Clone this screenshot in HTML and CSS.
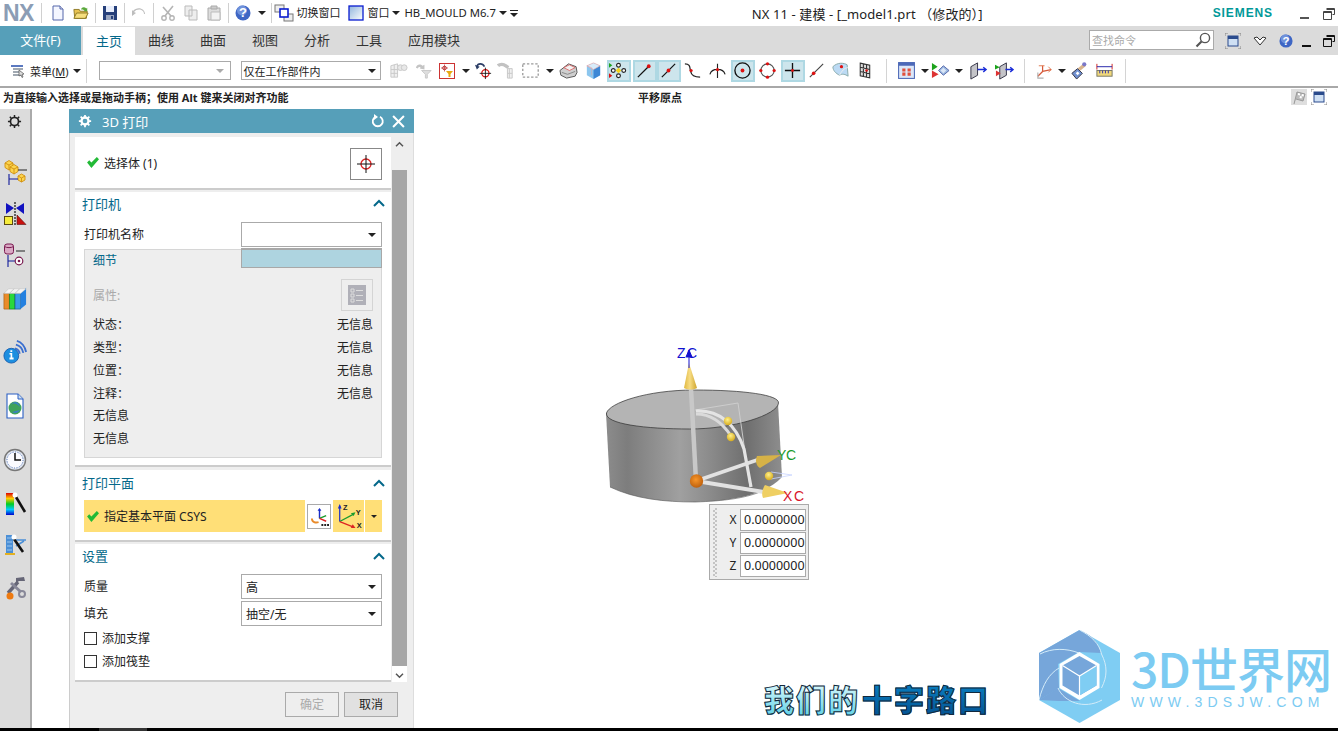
FILE: index.html
```html
<!DOCTYPE html>
<html lang="zh">
<head>
<meta charset="utf-8">
<title>NX 11 - 建模</title>
<link rel="stylesheet" href="styles.css">
</head>
<body>
<header class="titlebar">
  <div class="nx">NX</div>
  <i class="vsep s1"></i>
  <svg class="qa" viewBox="0 0 16 16"><path d="M3 1h7l3 3v11H3z" fill="#f4f6ff" stroke="#5566aa"/><path d="M10 1v3h3" fill="#dde" stroke="#5566aa"/></svg>
  <svg class="qa" viewBox="0 0 18 16"><path d="M1 4h6l1 2h8l-1 8H2z" fill="#e8c352" stroke="#8a7420"/><path d="M4 8h13l-3 6H1z" fill="#f6de7e" stroke="#8a7420"/><path d="M9 4c1-3 4-3 6-1l1-1v4h-4l1-1c-1-1-3-1-4-1z" fill="#5aa83c"/></svg>
  <i class="vsep"></i>
  <svg class="qa" viewBox="0 0 16 16"><path d="M1 1h14v14H1z" fill="#26407a"/><path d="M4 1h8v6H4z" fill="#e8eefc"/><path d="M4 10h8v5H4z" fill="#9aa6c0"/><path d="M9 11h2v3H9z" fill="#26407a"/></svg>
  <i class="vsep"></i>
  <svg class="qa" viewBox="0 0 16 16"><path d="M3 9c0-5 7-6 10-2l-2 1 4 3V5l-1 1C10 1 2 3 2 9z" fill="#bdbdbd" transform="matrix(-1 0 0 1 16 0)"/></svg>
  <i class="vsep"></i>
  <svg class="qa" viewBox="0 0 16 16"><path d="M13 1L5 11M3 2l8 9" stroke="#b5b5b5" stroke-width="1.600" fill="none"/><circle cx="4" cy="13" r="2.200" fill="none" stroke="#b5b5b5" stroke-width="1.400"/><circle cx="12" cy="13" r="2.200" fill="none" stroke="#b5b5b5" stroke-width="1.400"/></svg>
  <svg class="qa" viewBox="0 0 16 16"><path d="M2 1h7v10H2zM6 5h8v10H6z" fill="#eee" stroke="#bbb"/></svg>
  <svg class="qa" viewBox="0 0 16 16"><path d="M2 3h12v12H2z" fill="#ddd" stroke="#aaa"/><path d="M5 1h6v3H5z" fill="#ccc" stroke="#aaa"/><path d="M5 7h9v8H5z" fill="#f2f2f2" stroke="#bbb"/></svg>
  <i class="vsep"></i>
  <svg class="qa" viewBox="0 0 16 16"><circle cx="8" cy="8" r="7.500" fill="#3e66c4"/><circle cx="7" cy="5.500" r="5" fill="#6f91db"/><text x="8" y="12.400" class="qmark">?</text></svg>
  <i class="tri t1"></i>
  <i class="vsep"></i>
  <svg class="qa w-switch" viewBox="0 0 20 18"><rect x="1" y="1" width="9" height="7" fill="#eee" stroke="#777"/><rect x="10" y="10" width="9" height="7" fill="#eee" stroke="#777"/><rect x="6" y="5" width="8" height="8" fill="#fff" stroke="#0a1cd0" stroke-width="1.600"/></svg>
  <span class="qt">切换窗口</span>
  <svg class="qa w-win" viewBox="0 0 16 16"><defs><linearGradient id="wg" x1="0" y1="0" x2="1" y2="1"><stop offset="0" stop-color="#8fb4dc"/><stop offset="1" stop-color="#fff"/></linearGradient></defs><rect x="1" y="1" width="14" height="14" fill="url(#wg)" stroke="#0a1cd0" stroke-width="1.300"/></svg>
  <span class="qt">窗口</span>
  <i class="tri t2"></i>
  <span class="qt hb">HB_MOULD M6.7</span>
  <i class="tri t3"></i>
  <svg class="t4" viewBox="0 0 8 7"><path d="M0 .5h8" stroke="#222"/><path d="M0 3h8L4 7z" fill="#222"/></svg>
  <div class="doc-title">NX 11 - 建模 - [_model1.prt （修改的）]</div>
  <div class="siemens">SIEMENS</div>
  <i class="win-min"></i>
  <svg class="win-res" viewBox="0 0 12 12"><path d="M3.500 .5h8v6h-2M.5 3.500h8v8h-8z" fill="none" stroke="#444"/><path d="M.5 4.500h8M3.500 1.500h8" stroke="#444"/></svg>
</header>

<nav class="tabs">
  <div class="tab file">文件(F)</div>
  <div class="tab active">主页</div>
  <div class="tab">曲线</div>
  <div class="tab">曲面</div>
  <div class="tab">视图</div>
  <div class="tab">分析</div>
  <div class="tab">工具</div>
  <div class="tab wide">应用模块</div>
  <div class="search">
    <span>查找命令</span>
    <svg class="mag" viewBox="0 0 16 16"><circle cx="10" cy="6" r="4.600" fill="#fff" stroke="#555" stroke-width="1.400"/><path d="M6.500 9.500L1.500 14.500" stroke="#555" stroke-width="2.200"/></svg>
  </div>
  <svg class="fit" viewBox="0 0 16 16"><path d="M0 3V0h3M13 0h3v3M16 13v3h-3M3 16H0v-3" fill="none" stroke="#888"/><rect x="3" y="3" width="10" height="10" fill="#cfe0f4" stroke="#2a4b8d"/><rect x="3" y="3" width="10" height="3" fill="#2a4b8d"/></svg>
  <svg class="chev" viewBox="0 0 14 10"><path d="M1 2l3-1 3 3 3-3 3 1-6 7z" fill="#fff" stroke="#333"/></svg>
  <svg class="help" viewBox="0 0 16 16"><circle cx="8" cy="8" r="7.500" fill="#3e66c4"/><circle cx="7" cy="5.500" r="5" fill="#6f91db"/><text x="8" y="12.400" class="qmark">?</text></svg>
  <i class="win-min dark"></i>
  <svg class="win-res r2" viewBox="0 0 12 12"><path d="M3.500 .5h8v6h-2M.5 3.500h8v8h-8z" fill="none" stroke="#111"/><path d="M.5 4.500h8M3.500 1.500h8" stroke="#111"/></svg>
</nav>

<section class="toolbar">
  <svg class="menu-ic" viewBox="0 0 16 14"><path d="M1 2h12M3 5h10M3 8h8M3 11h8" stroke="#456" stroke-width="1.200"/><path d="M1 1h12v2H1z" fill="#5b79c0"/><path d="M9 6l5 4-2 .5 1 2.500-1 .5-1-2.500-2 1z" fill="#ddd" stroke="#555" stroke-width=".7"/></svg>
  <span class="menu-t">菜单(<u>M</u>)</span>
  <i class="tri t5"></i>
  <i class="tsep t-a"></i>
  <div class="combo c1"><i class="tri dim"></i></div>
  <div class="combo c2"><span>仅在工作部件内</span><i class="tri"></i></div>
  <div class="tb w24 first"><svg viewBox="0 0 20 20"><path d="M2 5l7-2v14l-7 0zM2 9h7M2 13h7M5.500 4v13" fill="#f0f0f0" stroke="#c8c8c8"/><circle cx="12" cy="7" r="3" fill="#e8e8e8" stroke="#c8c8c8"/><circle cx="16" cy="7" r="3" fill="#e8e8e8" stroke="#c8c8c8"/></svg></div>
  <div class="tb w26"><svg viewBox="0 0 20 20"><path d="M2 7c1-4 5-4 7-2l2-1v5l-5-1 1-1c-1-1-2-1-3 1z" fill="#c4c4c4"/><path d="M8 10h10l-4 4v4h-2v-4z" fill="#dedede" stroke="#c8c8c8"/></svg></div>
  <div class="tb w20"><svg class="boxed" viewBox="0 0 14 14"><circle cx="4.500" cy="4" r="1.800" fill="none" stroke="#b33"/><path d="M4.500 .5v7M1 4h7" stroke="#b33" stroke-width=".7"/><path d="M6 7h7l-2.500 3v3h-2v-3z" fill="#e9a810"/></svg></div>
  <i class="tri t6"></i>
  <div class="tb w22"><svg viewBox="0 0 20 20"><path d="M3 6c1-4 6-4 8 0" fill="none" stroke="#2b3d66" stroke-width="1.700"/><path d="M1 4l5 2-3 3z" fill="#2b3d66"/><circle cx="12" cy="13" r="3.800" fill="none" stroke="#d11" stroke-width="1.300"/><path d="M12 7v12M6 13h12" stroke="#111" stroke-width=".9"/></svg></div>
  <div class="tb w24"><svg viewBox="0 0 20 20"><path d="M1 5c2-2 6-2 8 0l3 2" stroke="#c2c2c2" stroke-width="3.500" fill="none"/><path d="M11 8h5v10h-5zM13 8v10M11 13h5" fill="#f0f0f0" stroke="#c8c8c8"/></svg></div>
  <div class="tb w24"><svg viewBox="0 0 16 16"><rect x="1.500" y="2.500" width="13" height="11" fill="none" stroke="#9a9a9a" stroke-width="1.100" stroke-dasharray="2 1.500"/></svg></div>
  <i class="tri t7"></i>
  <div class="tb w24"><svg viewBox="0 0 20 18"><path d="M1 9l9-7 8 3 1 6-2 4-9 2-6-3z" fill="#cfcfcf" stroke="#555"/><path d="M5 6l6-3 6 3-6 3z" fill="#f2f2f2" stroke="#d55" stroke-width=".8"/><path d="M3 11l6 2 8-3" fill="none" stroke="#888"/></svg></div>
  <div class="tb w26"><svg viewBox="0 0 20 20"><path d="M3 5l7-3 7 3v10l-7 4-7-4z" fill="#8cc6ee"/><path d="M10 9l7-4v10l-7 4z" fill="#3d87d5"/><path d="M3 5l7 4 7-4-7-3z" fill="#d8ecfa" stroke="#e8a0a0" stroke-width=".6"/><path d="M3 5l5 2v8" fill="none" stroke="#e8a0a0" stroke-width=".5"/></svg></div>
  <div class="tb w24 on"><svg viewBox="0 0 20 20"><circle cx="10" cy="4.500" r="2" fill="#fff" stroke="#222" stroke-width="1.200"/><circle cx="10" cy="15.500" r="2" fill="#fff" stroke="#222" stroke-width="1.200"/><circle cx="15.500" cy="10" r="2" fill="#fff" stroke="#222" stroke-width="1.200"/><circle cx="4.500" cy="10" r="2" fill="#fff" stroke="#222" stroke-width="1.200"/><path d="M10 7l3 3-3 3-3-3z" fill="#f6d61a"/><path d="M0 2l3.500 2.500L0 7z" fill="#1ca31c"/><path d="M0 13l3.500 2.500L0 18z" fill="#d11"/></svg></div>
  <div class="tb w24 on m2"><svg viewBox="0 0 20 20"><path d="M3 17L14 6" stroke="#111" stroke-width="1.300"/><circle cx="14.500" cy="5.500" r="2" fill="#d11"/></svg></div>
  <div class="tb w24 on"><svg viewBox="0 0 20 20"><path d="M3 17L17 3" stroke="#111" stroke-width="1.300"/><circle cx="10" cy="10" r="2" fill="#d11"/></svg></div>
  <div class="tb w24"><svg viewBox="0 0 20 20"><path d="M2 3c6 0 5 4 6 8 1 5 5 6 10 6" fill="none" stroke="#222" stroke-width="1.300"/><circle cx="8.500" cy="10" r="1.700" fill="#d11"/></svg></div>
  <div class="tb w26"><svg viewBox="0 0 20 20"><path d="M2 14c2-7 14-7 16 0M10 3v15" fill="none" stroke="#222" stroke-width="1.200"/><circle cx="10" cy="9" r="1.700" fill="#d11"/></svg></div>
  <div class="tb w24 on"><svg viewBox="0 0 20 20"><circle cx="10" cy="10" r="8" fill="none" stroke="#111" stroke-width="1.400"/><circle cx="10" cy="10" r="2" fill="#d11"/></svg></div>
  <div class="tb w26"><svg viewBox="0 0 20 20"><circle cx="10" cy="10" r="7" fill="none" stroke="#555" stroke-width="1.200"/><circle cx="10" cy="3" r="1.700" fill="#d11"/><circle cx="10" cy="17" r="1.700" fill="#d11"/><circle cx="3" cy="10" r="1.700" fill="#d11"/><circle cx="17" cy="10" r="1.700" fill="#d11"/></svg></div>
  <div class="tb w24 on"><svg viewBox="0 0 20 20"><path d="M10 2v16M2 10h16" stroke="#111" stroke-width="1.400"/><circle cx="10" cy="10" r="1.500" fill="#d11"/></svg></div>
  <div class="tb w23"><svg viewBox="0 0 20 20"><path d="M3 17L17 3" stroke="#444" stroke-width="1.200"/><circle cx="7" cy="13" r="1.900" fill="#d11"/></svg></div>
  <div class="tb w25"><svg viewBox="0 0 20 20"><path d="M2 6c5-5 12-4 15-2l1 12c-3-2-6-3-9-1-4-2-7-5-7-9z" fill="#bcdaf4" stroke="#8aa"/><path d="M9 15c2-4 5-8 9-8" fill="none" stroke="#eee"/><circle cx="11" cy="6" r="1.700" fill="#d11"/></svg></div>
  <div class="tb w25"><svg viewBox="0 0 18 18"><path d="M4 2l9 2v12l-9-2zM7 2.700v12M10 3.400v12M4 6l9 2M4 10l9 2" fill="#ddd" stroke="#333" stroke-width="1"/><circle cx="10" cy="9" r="1.200" fill="#d11"/></svg></div>
  <i class="tsep t-b"></i>
  <div class="tb w24"><svg viewBox="0 0 18 18"><rect x="1.500" y="1.500" width="15" height="15" fill="#dce7f8" stroke="#4d69b8"/><rect x="1.500" y="1.500" width="15" height="3" fill="#4d69b8"/><path d="M5 7h3v3H5zM10 7h3v3h-3zM5 11h3v3H5zM10 11h3v3h-3z" fill="#e0503c"/></svg></div>
  <i class="tri t8"></i>
  <div class="tb w24"><svg viewBox="0 0 20 18"><path d="M8 9l5-5 6 5-6 5z" fill="#9bb9e0" stroke="#56a"/><path d="M10 9l3-3 3 3-3 3z" fill="#dbe6f6"/><path d="M1 1l6 4-6 4z" fill="#1ca31c"/><path d="M1 9l7 4-7 4z" fill="#d33"/></svg></div>
  <i class="tri t8 t8b"></i>
  <div class="tb w26"><svg viewBox="0 0 20 20"><path d="M2 6l7-4v13l-7 4z" fill="#c4c4c8" stroke="#334"/><path d="M9 9h9M15 6.500l3 2.500-3 2.500" stroke="#1a2cd8" stroke-width="1.500" fill="none"/></svg></div>
  <div class="tb w26"><svg viewBox="0 0 20 20"><path d="M5 6l7-4v13l-7 4z" fill="#c4c4c8" stroke="#334"/><path d="M0 4l5 2.500L0 9z" fill="#1ca31c"/><path d="M1 10l5 3-5 3z" fill="#d33"/><path d="M11 9h8M16 6.500l3 2.500-3 2.500" stroke="#1a2cd8" stroke-width="1.500" fill="none"/></svg></div>
  <i class="tsep t-c"></i>
  <div class="tb w24"><svg viewBox="0 0 20 20"><path d="M8 11V5M8 11l9-2M8 11l-5 5" stroke="#d65a3a" stroke-width="1.300" fill="none"/><path d="M4 5h6M14 6l3 3-3 3" stroke="#e07a50" fill="none"/><path d="M3 12v6h6" stroke="#b0b0b0" stroke-width="1.200" fill="none"/></svg></div>
  <i class="tri t9"></i>
  <div class="tb w24"><svg viewBox="0 0 20 20"><path d="M2 13l6-5 5 5-6 6z" fill="#6f8fcf" stroke="#334"/><path d="M6 13l2-2 2 2-2 2z" fill="#fff"/><path d="M8 8l6-5 3 2-6 5z" fill="#d8b48c"/><circle cx="15" cy="3.500" r="2.200" fill="#7a78c9"/></svg></div>
  <div class="tb w26"><svg viewBox="0 0 20 18"><path d="M2 2v6M18 2v6" stroke="#c22" fill="none"/><path d="M2 5h16" stroke="#22a" fill="none"/><rect x="2" y="9" width="16" height="6" fill="#f0d87a" stroke="#776"/><path d="M5 9v3M8 9v3M11 9v3M14 9v3" stroke="#33a"/></svg></div>
  <i class="tsep t-d"></i>
</section>

<section class="status">
  <span class="cue">为直接输入选择或是拖动手柄；使用 Alt 键来关闭对齐功能</span>
  <span class="cue2">平移原点</span>
  <svg class="flag" viewBox="0 0 16 16"><rect width="16" height="16" fill="#dedede"/><path d="M3 15L6 3l8 2-2 7-7-2" fill="#bbb" stroke="#999"/><path d="M7 4l2 .5v2l-2-.5zM11 5l2 .5-.5 2-2-.5zM9 7l2 .5-.5 2-2-.5z" fill="#fff"/></svg>
  <svg class="fit f2" viewBox="0 0 16 16"><path d="M0 3V0h3M13 0h3v3M16 13v3h-3M3 16H0v-3" fill="none" stroke="#888"/><rect x="3" y="3" width="10" height="10" fill="#cfe0f4" stroke="#2a4b8d"/><rect x="3" y="3" width="10" height="3" fill="#2a4b8d"/></svg>
</section>

<main class="work">
  <aside class="rail">
    <svg class="gear" viewBox="0 0 16 16"><circle cx="8" cy="8" r="4.300" fill="none" stroke="#222" stroke-width="1.800"/><path d="M8 1v3M8 12v3M1 8h3M12 8h3M3 3l2 2M11 11l2 2M13 3l-2 2M5 11l-2 2" stroke="#222" stroke-width="1.600"/></svg>
    <div class="rgroup g1">
      <svg class="ri" viewBox="0 0 24 26"><g fill="#fcd44e" stroke="#d09010" stroke-width=".9"><path d="M2 4l4-2.500L10 4v4.500L6 11 2 8.500z"/><path d="M7 8l4-2.500L15 8v4.500L11 15l-4-2.500z"/><path d="M15 17l3.500-2 3.500 2v4l-3.500 2-3.500-2z"/><path d="M2 4l4 2 4-2M6 6v5M7 8l4 2 4-2M11 10v5M15 17l3.500 2 3.500-2M18.500 19v4" fill="none"/></g><path d="M15 11h9" stroke="#222"/><path d="M6 15v11M6 20h9" stroke="#111a9a" stroke-width="1.100"/></svg>
      <svg class="ri" viewBox="0 0 24 26"><path d="M3 2l8 5-8 6zM21 2l-8 5 8 6z" fill="#1212c0"/><path d="M12 1v24" stroke="#111" stroke-dasharray="2 1" stroke-width="1.200"/><rect x="1.500" y="15.500" width="8" height="8" fill="#f6ec3c" stroke="#5a4a10"/><path d="M14 14l9 9.500h-9z" fill="#c8100d" stroke="#5a1010" stroke-width=".6"/></svg>
      <svg class="ri" viewBox="0 0 24 26"><rect x="1.500" y="1" width="9" height="10" rx="2.500" fill="#d9a9c4" stroke="#7a1b50"/><path d="M1.500 3.500c2 1.500 7 1.500 9 0" fill="none" stroke="#7a1b50"/><path d="M13 8h9" stroke="#222"/><path d="M5 12v12M5 18h7" stroke="#111a9a" stroke-width="1.100"/><circle cx="16" cy="18" r="3.800" fill="#fff" stroke="#7a1b50" stroke-width="1.200"/><circle cx="16" cy="18" r="1.300" fill="#7a1b50"/></svg>
      <svg class="ri" viewBox="0 0 26 26"><path d="M1 8h6v17H1z" fill="#e98b2a" stroke="#a85f10" stroke-width=".7"/><path d="M7 8h6v17H7z" fill="#29d83c" stroke="#117a1c" stroke-width=".7"/><path d="M13 8h6v17h-6z" fill="#3b9ae8" stroke="#16568a" stroke-width=".7"/><path d="M19 8l6-6v18l-6 5z" fill="#2380e0"/><path d="M1 8l5-5h6L7 8zM7 8l5-5h6l-5 5zM13 8l5-5h7l-6 5z" fill="#f4f4f4" stroke="#bbb" stroke-width=".5"/></svg>
    </div>
    <div class="rgroup g2">
      <svg class="ri" viewBox="0 0 26 26"><path d="M14 5c4 1 7 4 8 9M15 1c5 1 9 6 10 12M13 9c3 1 5 3 5 6" fill="none" stroke="#3a6fd0" stroke-width="2"/><circle cx="9" cy="17" r="8" fill="#1d8fe0" stroke="#1a5fb0"/><path d="M8 11h2v2H8zM7 14h3v5h1.500v2H7v-2h1.200v-3.200H7z" fill="#fff"/></svg>
      <svg class="ri" viewBox="0 0 24 26"><path d="M4 1h11l5 5v19H4z" fill="#fff" stroke="#2b5fc4" stroke-width="1.100"/><path d="M15 1v5h5" fill="#cde" stroke="#2b5fc4"/><circle cx="12" cy="15" r="6.500" fill="#3fa35a"/><path d="M8 12c3-3 6-1 9 2-1-5-6-7-9-2zM9 19c3 2 6 1 8-2-3 1-5 1-8 2z" fill="#3b7fc4"/></svg>
      <svg class="ri" viewBox="0 0 24 24"><circle cx="12" cy="12" r="10.500" fill="#dfe5ef" stroke="#777" stroke-width="1.400"/><circle cx="12" cy="12" r="8" fill="#fbfbff" stroke="#4d6fb5" stroke-dasharray="1 1.500"/><path d="M12 5v7h6" stroke="#111" stroke-width="1.500" fill="none"/></svg>
    </div>
    <div class="rgroup g3">
      <svg class="ri" viewBox="0 0 24 26"><defs><linearGradient id="rb" x1="0" y1="0" x2="0" y2="1"><stop offset="0" stop-color="#d00"/><stop offset=".25" stop-color="#fc0"/><stop offset=".5" stop-color="#0c2"/><stop offset=".75" stop-color="#0cf"/><stop offset="1" stop-color="#00c"/></linearGradient></defs><rect x="3" y="3" width="8" height="22" fill="url(#rb)"/><path d="M13 7l9 15" stroke="#111" stroke-width="2.600"/><circle cx="12" cy="5" r="2.500" fill="#fff"/></svg>
      <svg class="ri" viewBox="0 0 24 26"><path d="M3 3h7v18H3z" fill="#4b8fd6"/><path d="M4 6h5M4 10h5M4 14h5M4 18h5" stroke="#9cc6ee"/><path d="M2 22h10" stroke="#e3b020" stroke-width="2"/><path d="M12 8h11M13 14l8-5" stroke="#4b8fd6" stroke-width="1.500"/><path d="M11 7l9 13" stroke="#111" stroke-width="2.600"/><circle cx="11" cy="5" r="2.500" fill="#fff"/></svg>
      <svg class="ri" viewBox="0 0 24 26"><path d="M5 19l10-11" stroke="#667" stroke-width="3.400"/><path d="M13 4l8-1 1 4-6 0-3 2z" fill="#667"/><path d="M18 18L8 9" stroke="#889" stroke-width="3"/><circle cx="19" cy="20" r="3" fill="none" stroke="#889" stroke-width="2"/><circle cx="7" cy="22" r="3.500" fill="#ee7a10"/></svg>
    </div>
  </aside>

  <div class="canvas">
    <section class="dialog">
      <header class="dlg-head">
        <svg class="dlg-gear" viewBox="0 0 16 16"><circle cx="8" cy="8" r="4" fill="none" stroke="#fff" stroke-width="2.600"/><path d="M8 1v3M8 12v3M1 8h3M12 8h3M3 3l2 2M11 11l2 2M13 3l-2 2M5 11l-2 2" stroke="#fff" stroke-width="2"/></svg>
        <span class="dlg-title">3D 打印</span>
        <svg class="dlg-reset" viewBox="0 0 14 14"><path d="M9 2.800a5 5 0 1 1-4.500 0" fill="none" stroke="#fff" stroke-width="1.800"/><path d="M3 0l4 3-4 3z" fill="#fff"/></svg>
        <svg class="dlg-close" viewBox="0 0 12 12"><path d="M1 1l10 10M11 1L1 11" stroke="#fff" stroke-width="1.900"/></svg>
      </header>
      <div class="dlg-main">
        <div class="sections">
          <div class="sec sec-sel">
            <svg class="check" viewBox="0 0 12 10"><path d="M1 5l2-2 2 2 5-5 2 2-7 8z" fill="#22ba36"/></svg>
            <span class="sel-text">选择体 (1)</span>
            <div class="target"><svg viewBox="0 0 20 20"><circle cx="10" cy="10" r="5" fill="none" stroke="#d22" stroke-width="1.300"/><path d="M10 1v18M1 10h18" stroke="#111"/></svg></div>
          </div>
          <div class="sec sec-printer">
            <div class="sec-head"><span>打印机</span><svg class="up" viewBox="0 0 12 8"><path d="M1 7l5-5 5 5" fill="none" stroke="#04688a" stroke-width="2"/></svg></div>
            <div class="row"><span>打印机名称</span><div class="sel"><i class="tri"></i></div></div>
            <div class="group">
              <div class="g-title">细节</div>
              <div class="g-attr"><span>属性:</span><div class="attr-btn"><svg viewBox="0 0 18 20"><rect width="18" height="20" fill="#b0b0b8"/><path d="M3 4h3v3H3zM3 9h3v3H3zM3 14h3v3H3z" fill="none" stroke="#ddd"/><path d="M8 5.500h7M8 10.500h7M8 15.500h7" stroke="#ddd"/></svg></div></div>
              <div class="g-row"><span>状态：</span><span>无信息</span></div>
              <div class="g-row"><span>类型：</span><span>无信息</span></div>
              <div class="g-row"><span>位置：</span><span>无信息</span></div>
              <div class="g-row"><span>注释：</span><span>无信息</span></div>
              <div class="g-row tight"><span>无信息</span></div>
              <div class="g-row"><span>无信息</span></div>
            </div>
            <div class="drop"></div>
          </div>
          <div class="sec sec-plane">
            <div class="sec-head"><span>打印平面</span><svg class="up" viewBox="0 0 12 8"><path d="M1 7l5-5 5 5" fill="none" stroke="#04688a" stroke-width="2"/></svg></div>
            <div class="plane">
              <div class="plane-l"><svg class="check" viewBox="0 0 12 10"><path d="M1 5l2-2 2 2 5-5 2 2-7 8z" fill="#22ba36"/></svg><span>指定基本平面 CSYS</span></div>
              <div class="plane-b"><svg viewBox="0 0 20 20"><path d="M10 12V2" stroke="#1a2cc8" stroke-width="1.500"/><path d="M8 4l2-3 2 3z" fill="#1a2cc8"/><path d="M10 12l7-3" stroke="#1a9b2e" stroke-width="1.500"/><path d="M10 12l7 3" stroke="#d22" stroke-width="1.500"/><path d="M2 12c0 4 4 5 7 4" fill="none" stroke="#e98b2a" stroke-width="2"/><path d="M12 18h2v2h-2zM15 18h2v2h-2zM18 18h2v2h-2z" fill="#222"/></svg></div>
              <div class="plane-c"><svg viewBox="0 0 32 28"><path d="M6 20V3" stroke="#1a2cc8" stroke-width="1.300"/><path d="M4 6l2-5 2 5z" fill="#1a2cc8"/><path d="M6 20l15-8" stroke="#1a9b2e" stroke-width="1.300"/><path d="M18 11l5-1-2 4z" fill="#1a9b2e"/><path d="M6 20l15 6" stroke="#d22" stroke-width="1.300"/><path d="M18 27l5 0-3-4z" fill="#d22"/><text x="12" y="7" class="axis">Z</text><text x="26" y="13" class="axis">Y</text><text x="27" y="27" class="axis">X</text></svg></div>
              <div class="plane-d"><i class="tri"></i></div>
            </div>
          </div>
          <div class="sec sec-set">
            <div class="sec-head"><span>设置</span><svg class="up" viewBox="0 0 12 8"><path d="M1 7l5-5 5 5" fill="none" stroke="#04688a" stroke-width="2"/></svg></div>
            <div class="row"><span>质量</span><div class="sel"><b>高</b><i class="tri"></i></div></div>
            <div class="row r2"><span>填充</span><div class="sel"><b>抽空/无</b><i class="tri"></i></div></div>
            <label class="chk c-first"><i></i><span>添加支撑</span></label>
            <label class="chk"><i></i><span>添加筏垫</span></label>
          </div>
        </div>
        <div class="scroll">
          <div class="sc-top"><svg viewBox="0 0 10 8"><path d="M1 6l4-4 4 4" fill="none" stroke="#555" stroke-width="1.700"/></svg></div>
          <div class="sc-thumb"></div>
          <div class="sc-bot"><svg viewBox="0 0 10 8"><path d="M1 2l4 4 4-4" fill="none" stroke="#555" stroke-width="1.700"/></svg></div>
        </div>
      </div>
      <footer class="dlg-foot">
        <div class="btn off">确定</div>
        <div class="btn cancel">取消</div>
      </footer>
    </section>

    <svg class="model" viewBox="590 330 230 180">
      <defs>
        <linearGradient id="cyl" x1="0" y1="0" x2="1" y2="0"><stop offset="0" stop-color="#8c8c8c"/><stop offset=".12" stop-color="#7d7d7d"/><stop offset=".42" stop-color="#a0a0a0"/><stop offset=".6" stop-color="#8a8a8a"/><stop offset=".8" stop-color="#6f6f6f"/><stop offset="1" stop-color="#8e8e8e"/></linearGradient>
        <linearGradient id="cone" x1="0" y1="0" x2="1" y2="0"><stop offset="0" stop-color="#e0b840"/><stop offset=".45" stop-color="#f7dc83"/><stop offset="1" stop-color="#cfa52e"/></linearGradient>
        <radialGradient id="ball" cx=".45" cy=".35" r=".65"><stop offset="0" stop-color="#fff08a"/><stop offset="1" stop-color="#d6ab1e"/></radialGradient>
        <radialGradient id="orig" cx=".45" cy=".4" r=".7"><stop offset="0" stop-color="#f8962a"/><stop offset="1" stop-color="#b55808"/></radialGradient>
      </defs>
      <path d="M606 413l4 74c25 12 55 15 85 15 40-1 72-8 87-25l-4-74z" fill="url(#cyl)"/>
      <path d="M606.500 413c3-10 40-23 88-23 50 0 85 5 84 13-1 12-45 26-89 26-44 0-85-5-83-16z" fill="#b4b4b4" stroke="#2e2e2e" stroke-width=".7"/>
      <path d="M610 487c25 12 55 15 85 15 30-1 50-4 65-10" fill="none" stroke="#555" stroke-width=".6"/>
      <path d="M695 410l43-7 12 84" fill="none" stroke="#cfcfcf" stroke-width=".9"/>
      <path d="M696 411c24-1 40 14 48 38l7 38" fill="none" stroke="#e4e4e4" stroke-width="3.200"/>
      <path d="M696 414c14 0 26 8 35 22" fill="none" stroke="#dadada" stroke-width="3"/>
      <path d="M696 481l-5-92" stroke="#c8c8c8" stroke-width="4.500"/>
      <path d="M696 481l64-22" stroke="#e2e2e2" stroke-width="3.800"/>
      <path d="M696 481l68 11" stroke="#e2e2e2" stroke-width="3.800"/>
      <path d="M771 472l21 3-21 4" fill="none" stroke="#c8d4ff" stroke-width=".8"/>
      <path d="M684 388l5-25 8 25c-4 2-9 2-13 0z" fill="url(#cone)"/>
      <path d="M757 456l24-1-21 13c-4-2-5-8-3-12z" fill="#d6b247"/>
      <path d="M765 485l23 8-25 5c-2-4 0-10 2-13z" fill="#efcf62"/>
      <path d="M689 368v-14M686 357l3-7 3 7z" stroke="#1212d0" fill="#1212d0"/>
      <circle cx="728" cy="421" r="4.200" fill="url(#ball)"/>
      <circle cx="731" cy="437" r="4.200" fill="url(#ball)"/>
      <circle cx="769" cy="476" r="4.200" fill="url(#ball)"/>
      <circle cx="696.500" cy="481" r="6.700" fill="url(#orig)"/>
      <text x="677" y="358" class="lb lz">Z</text>
      <text x="687" y="358" class="lb lz">C</text>
      <text x="777" y="460" class="lb ly">Y</text><text x="786" y="460" class="lb ly">C</text>
      <text x="783" y="501" class="lb lx">X</text><text x="794" y="501" class="lb lx">C</text>
    </svg>

    <div class="coords">
      <div class="grip"></div>
      <div class="c-rows">
        <div class="c-row"><span>X</span><div class="c-in">0.0000000</div></div>
        <div class="c-row"><span>Y</span><div class="c-in">0.0000000</div></div>
        <div class="c-row"><span>Z</span><div class="c-in">0.0000000</div></div>
      </div>
    </div>

    <div class="mark"><span class="m1">我们的</span><span class="m2">十字路口</span></div>

    <div class="brand">
      <svg class="hex" viewBox="1039 630 81 93">
        <path d="M1079.500 630l40.500 23v47l-40.500 23-40.500-23v-47z" fill="#7fcdf3"/>
        <path d="M1079.500 630l-40.500 23v47l20-12-1-24 21-12 22 1c-3-12-10-18-21.500-23z" fill="#76a6da"/>
        <path d="M1058 688l22 13c-14 0-30 0-41-1z" fill="#76a6da"/>
        <path d="M1039 700c4-16 10-26 20-32M1079.500 630c12 6 20 14 22 24 6 12 6 22 0 34M1058 688c6 14 26 22 44 12M1040 654c12-6 26-6 39-1" fill="none" stroke="#d4ecf9"/>
        <path d="M1079.500 652l20 12v24l-20 12-20-12v-24z" fill="#fff"/>
        <path d="M1079.500 656l17 9.500v20l-17 10-17-10v-20z" fill="#76a6da"/>
        <path d="M1079.500 676l17-10.500v20l-17 10z" fill="#7fcdf3"/>
        <path d="M1062.500 665.500l17 10.500 17-10.500M1079.500 676v20" fill="none" stroke="#fff" stroke-width="1.200"/>
      </svg>
      <div class="brand-t">
        <div class="b-big">3D世界网</div>
        <div class="b-url">WWW.3DSJW.COM</div>
      </div>
    </div>
  </div>
</main>

<footer class="taskbar"><i></i></footer>
</body>
</html>
```

FILE: styles.css
```css
* { box-sizing: border-box; }
html, body { margin: 0; padding: 0; }
body {
  width: 1338px; height: 731px; overflow: hidden; background: #fff;
  display: flex; flex-direction: column;
  font: 12px "Noto Sans", "Noto Sans CJK SC", sans-serif; color: #222;
}
i { display: block; font-style: normal; }
svg { display: block; flex: none; }

.tri { width: 0; height: 0; border: 4px solid transparent; border-top-color: #222; border-bottom-width: 0; flex: none; }
.tri.dim { border-top-color: #aaa; }

/* title bar */
.titlebar { height: 26px; flex: none; display: flex; align-items: center; padding-left: 3px; }
.nx { width: 33px; font: bold 23px "Liberation Sans", sans-serif; color: #8b9db5; letter-spacing: -.5px; }
.vsep { width: 1px; height: 20px; background: #d0d0d0; flex: none; margin: 0 2.500px; }
.vsep.s1 { margin: 0 4.500px 0 5px; }
.qa { width: 16px; height: 16px; margin: 0 3.500px; }
.qmark { font: bold 13px "Liberation Sans", sans-serif; fill: #fff; text-anchor: middle; }
.t1 { margin: 0 2px 0 3.500px; }
.w-switch { width: 20px; height: 18px; margin: 0 2.500px 0 0; }
.w-win { margin: 0 4px 0 7px; }
.qt { white-space: nowrap; font-size: 11px; line-height: 16px; }
.t2 { margin-left: 2px; }
.hb { margin-left: 5px; font-size: 11.300px; }
.t3 { margin-left: 3px; }
.t4 { width: 8px; height: 7px; margin-left: 3px; }
.doc-title { margin-left: 234px; white-space: nowrap; font-size: 13px; letter-spacing: .1px; }
.siemens { margin-left: auto; font: bold 12px "Liberation Sans", sans-serif; color: #019999; letter-spacing: .9px; }
.win-min { width: 9px; height: 2px; background: #555; margin: 10px 0 0 27px; flex: none; }
.win-min.dark { background: #111; margin: 10px 0 0 8px; }
.win-res { width: 12px; height: 12px; margin: 2px 3px 0 14px; }
.win-res.r2 { margin: 0 3px 0 13px; }

/* tabs */
.tabs { height: 29px; flex: none; background: #dbdbdb; display: flex; align-items: stretch; }
.tab { width: 52px; text-align: center; font-size: 13px; line-height: 29px; color: #333; }
.tab.wide { width: 78px; }
.tab.file { width: 81px; margin-right: 2px; background: #569fb9; color: #fff; }
.tab.active { background: #fff; color: #04688a; margin-top: 1px; line-height: 28px; }
.search { width: 125px; height: 20px; margin: 4px 0 0 auto; background: #fff; border: 1px solid #aaa; display: flex; align-items: center; justify-content: space-between; padding: 0 2px; color: #aaa; font-size: 11px; }
.mag { width: 16px; height: 16px; }
.fit { width: 16px; height: 16px; margin: 7px 0 0 11px; }
.chev { width: 14px; height: 10px; margin: 10px 0 0 12px; }
.help { width: 14px; height: 14px; margin: 8px 0 0 12px; }
.tabs .win-min { margin-top: 19px; margin-left: 9px; height: 2px; }
.tabs .win-res { margin-top: 9px; margin-left: 12px; }

/* toolbar */
.toolbar { height: 33px; flex: none; display: flex; align-items: center; padding-left: 10px; border-bottom: 2px solid #a8a8a8; }
.menu-ic { width: 16px; height: 14px; }
.menu-t { margin-left: 4px; font-size: 11px; white-space: nowrap; }
.t5 { margin-left: 4px; }
.tsep { width: 1px; height: 24px; background: #d4d4d4; flex: none; }
.t-a { margin: 0 12px 0 5px; }
.combo { height: 19px; background: #fff; border: 1px solid #aaa; display: flex; align-items: center; justify-content: space-between; padding: 0 4px 0 2px; flex: none; }
.c1 { width: 132px; padding-right: 6px; justify-content: flex-end; }
.c2 { width: 140px; margin-left: 10px; font-size: 11px; }
.tb { height: 22px; display: flex; align-items: center; justify-content: center; flex: none; border: 2px solid transparent; }
.tb svg { width: 19px; height: 19px; }
.tb.on { background: #cde5ec; border-color: #aed8e3; }
.tb svg.boxed { width: 16px; height: 16px; border: 1px solid #c33; }
.w20 { width: 20px; } .w22 { width: 22px; } .w23 { width: 23px; } .w24 { width: 24px; } .w25 { width: 25px; } .w26 { width: 26px; }
.first { margin-left: 6px; }
.m2 { margin-left: 2px; }
.t6 { margin: 0 3px 0 5px; }
.t7 { margin: 0 3px 0 3px; }
.t8 { margin: 0 0 0 2px; }
.t8b { margin-right: 3px; }
.t9 { margin: 0 2px 0 1px; }
.t-b { margin: 0 8px; }
.t-c { margin: 0 8px 0 6px; }
.t-d { margin-left: 7px; }

/* status */
.status { height: 17px; flex: none; display: flex; align-items: center; padding-left: 3px; font-size: 11px; font-weight: 700; }
.cue { width: 635px; white-space: nowrap; }
.cue2 { white-space: nowrap; }
.flag { width: 16px; height: 16px; margin-left: auto; }
.f2 { margin: 0 11px 0 4px; }

/* work */
.work { flex: 1; min-height: 0; display: flex; }
.rail { width: 32px; margin-top: 4px; flex: none; background: #dcdcdc; border-right: 2px solid #aaa; display: flex; flex-direction: column; align-items: center; padding-right: 1px; }
.gear { width: 15px; height: 15px; margin-top: 5px; }
.rgroup { display: flex; flex-direction: column; }
.rgroup.g1 { margin-top: 27px; gap: 10px; }
.rgroup.g2 { margin-top: 22px; gap: 22px; }
.rgroup.g3 { margin-top: 11px; gap: 10px; }
.ri { width: 30px; height: 32px; padding: 3px; }

.canvas { position: relative; flex: 1; }

/* dialog */
.dialog { position: absolute; left: 37px; top: 4px; width: 345px; height: 619px; background: #eee; display: flex; flex-direction: column; border-left: 1px solid #ccc; border-right: 1px solid #ddd; }
.dlg-head { height: 24px; flex: none; background: #569fb9; display: flex; align-items: center; color: #fff; padding: 0 9px; margin: 0 -1px; }
.dlg-gear { width: 14px; height: 14px; }
.dlg-title { margin-left: 10px; font-size: 13px; }
.dlg-reset { width: 14px; height: 14px; margin-left: auto; }
.dlg-close { width: 13px; height: 13px; margin-left: 7px; }
.dlg-main { flex: 1; min-height: 0; display: flex; margin-top: 4px; padding-left: 5px; }
.sections { width: 316px; flex: none; display: flex; flex-direction: column; }
.sec { background: #fff; border-bottom: 2px solid #ccc; position: relative; padding: 0 9px; flex: none; }
.sec-sel { height: 53px; display: flex; align-items: center; }
.check { width: 13px; height: 11px; margin: 0 5px 0 2px; }
.sel-text { flex: 1; }
.target { width: 32px; height: 32px; border: 1px solid #888; display: flex; align-items: center; justify-content: center; margin-top: 3px; }
.target svg { width: 20px; height: 20px; }
.sec-printer { margin-top: 2px; height: 275px; }
.sec-plane { margin-top: 3px; height: 72px; }
.sec-set { margin-top: 2px; height: 138px; }
.sec-head { display: flex; align-items: center; justify-content: space-between; color: #04688a; font-size: 13px; margin: 0 -3px 0 -2px; }
.sec-printer .sec-head { height: 22px; margin-bottom: 8px; }
.sec-plane .sec-head { height: 25px; margin-bottom: 5px; }
.sec-set .sec-head { height: 23px; margin-bottom: 7px; }
.up { width: 12px; height: 8px; }
.row { display: flex; align-items: center; justify-content: space-between; height: 25px; }
.row > span { padding-bottom: 2px; }
.row.r2 { margin-top: 2px; }
.sel { width: 141px; height: 25px; border: 1px solid #aaa; background: #fff; display: flex; align-items: center; justify-content: space-between; padding: 0 5px 0 4px; }
.sel .tri { margin-left: auto; }
.sel b { font-weight: 400; }
.group { margin-top: 2px; height: 209px; background: #eee; border: 1px solid #d6d6d6; padding: 0 8px; }
.g-title { height: 21px; line-height: 21px; color: #04688a; }
.g-attr { display: flex; align-items: center; justify-content: space-between; margin-top: 8px; height: 32px; color: #aaa; }
.attr-btn { width: 32px; height: 32px; border: 1px solid #d4d4d4; display: flex; align-items: center; justify-content: center; }
.attr-btn svg { width: 18px; height: 20px; }
.g-row { display: flex; justify-content: space-between; height: 23px; line-height: 23px; }
.g-attr + .g-row { margin-top: 2px; }
.g-row.tight { margin-top: -1px; }
.drop { position: absolute; left: 166px; top: 56px; width: 141px; height: 20px; background: #aed4e0; border: 1px solid #a8a8a8; border-top-width: 2px; }
.plane { display: flex; height: 32px; }
.plane-l { width: 221px; background: #ffdf77; display: flex; align-items: center; }
.plane-b { width: 24px; height: 25px; margin: 4px 2px 0; border: 1px solid #aaa; background: #fff; display: flex; align-items: center; justify-content: center; }
.plane-b svg { width: 19px; height: 19px; }
.plane-c { width: 32px; background: #ffdf77; display: flex; align-items: center; justify-content: center; border-right: 1px solid #fff; }
.plane-c svg { width: 30px; height: 26px; }
.axis { font: bold 8px "Liberation Sans", sans-serif; fill: #222; text-anchor: middle; }
.plane-d { width: 17px; background: #ffdf77; display: flex; align-items: center; justify-content: center; }
.plane-d .tri { border-width: 3px; border-bottom-width: 0; }
.chk { display: flex; align-items: center; height: 23px; gap: 5px; }
.chk span { padding-bottom: 2px; }
.c-first { margin-top: 1px; }
.chk i { width: 13px; height: 13px; border: 1px solid #333; background: #fff; }
.scroll { width: 15px; margin-left: 1px; flex: none; display: flex; flex-direction: column; }
.sc-top { height: 33px; display: flex; justify-content: center; padding-top: 4px; }
.sc-top svg, .sc-bot svg { width: 9px; height: 7px; }
.sc-thumb { height: 496px; background: #a6a6a6; }
.sc-bot { flex: 1; background: #fff; display: flex; justify-content: center; padding-top: 6px; }
.dlg-foot { height: 46px; flex: none; display: flex; justify-content: flex-end; gap: 5px; padding: 10px 15px 0 0; }
.btn { width: 54px; height: 25px; line-height: 23px; text-align: center; border: 1px solid #aaa; }
.btn.off { color: #aaa; }
.btn.cancel { background: #e1e1e1; color: #222; }

/* model */
.model { position: absolute; left: 558px; top: 225px; width: 230px; height: 180px; }
.lb { font: 14px "Liberation Sans", sans-serif; }
.lz { fill: #1212d0; } .ly { fill: #1a9b2e; } .lx { fill: #d8142a; }

.coords { position: absolute; left: 677px; top: 399px; width: 100px; height: 76px; background: #eee; border: 1px solid #aaa; display: flex; padding: 3px 2px 2px 3px; }
.grip { width: 6px; background: conic-gradient(#c4c4c4 25%, transparent 0 50%, #c4c4c4 0 75%, transparent 0) 0 0 / 4px 4px; margin-right: 14px; }
.c-rows { flex: 1; display: flex; flex-direction: column; margin-left: -3px; }
.c-row { flex: 1; display: flex; align-items: center; gap: 2px; }
.c-row span { width: 10px; text-align: center; }
.c-in { flex: 1; height: 22px; line-height: 20px; border: 1px solid #aaa; background: #fff; padding-left: 3px; overflow: hidden; white-space: nowrap; width: 66px; font-size: 12.500px; }

/* watermark */
.mark { position: absolute; left: 732px; top: 573px; display: flex; font: 900 30px/40px "Noto Sans CJK SC", sans-serif; letter-spacing: 2px; -webkit-text-stroke: 1px #13283c; white-space: nowrap; }
.m1 { color: transparent; background: linear-gradient(#f0ffff, #58cfe6); -webkit-background-clip: text; background-clip: text; }
.m2 { color: transparent; background: linear-gradient(#0a86c8, #04508f); -webkit-background-clip: text; background-clip: text; }

.brand { position: absolute; left: 1007px; top: 525px; display: flex; gap: 11px; }
.hex { width: 81px; height: 93px; }
.brand-t { color: #7ccbf2; padding-top: 11px; }
.b-big { font: 500 48px/52px "Noto Sans CJK SC", sans-serif; white-space: nowrap; letter-spacing: -1px; }
.b-url { font: 400 14px/18px "Liberation Sans", sans-serif; letter-spacing: 5.200px; white-space: nowrap; }

.taskbar { height: 3px; flex: none; background: #000; }
.taskbar i { width: 48px; height: 3px; margin-left: 99px; background: #333; }
```
